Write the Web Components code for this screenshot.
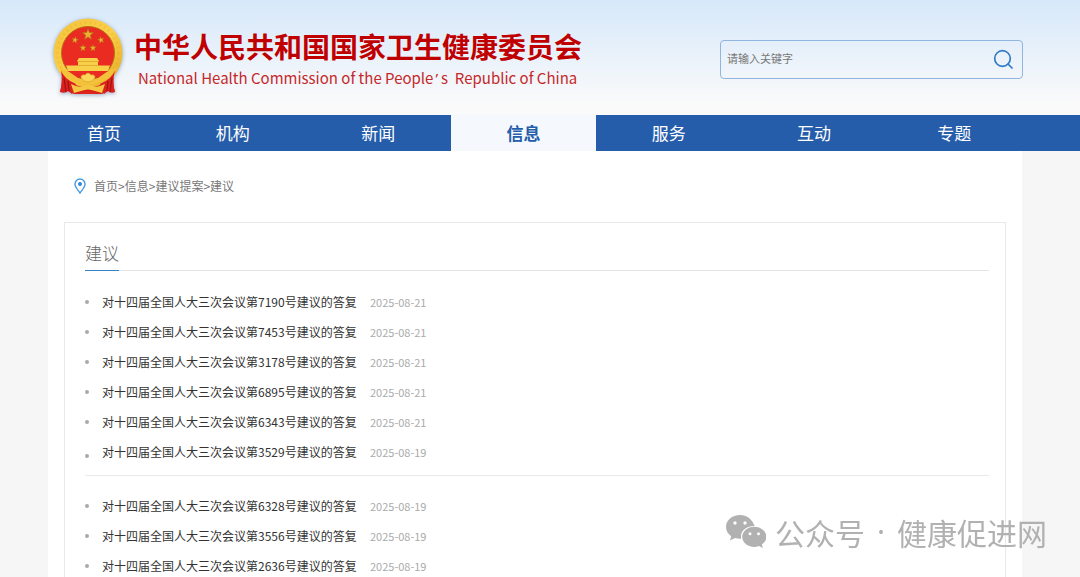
<!DOCTYPE html>
<html lang="zh-CN">
<head>
<meta charset="utf-8">
<meta name="viewport" content="width=device-width, initial-scale=1">
<title>建议 - 中华人民共和国国家卫生健康委员会</title>
<style>
  body {
    margin: 0; background: #f6f6f6; color: #333;
    font-family: "Noto Sans CJK SC", "Noto Sans", sans-serif; font-size: 12px;
    --gutter-left: 48px; --gutter-right: 58px; --blue: #255dab;
  }
</style>
</head>
<body>
<site-header></site-header>
<site-nav></site-nav>
<page-body>
  <crumb-trail></crumb-trail>
  <list-panel heading="建议">
    <reply-group ruled>
      <reply-item no="7190" date="2025-08-21"></reply-item>
      <reply-item no="7453" date="2025-08-21"></reply-item>
      <reply-item no="3178" date="2025-08-21"></reply-item>
      <reply-item no="6895" date="2025-08-21"></reply-item>
      <reply-item no="6343" date="2025-08-21"></reply-item>
      <reply-item no="3529" date="2025-08-19" closing></reply-item>
    </reply-group>
    <reply-group>
      <reply-item no="6328" date="2025-08-19"></reply-item>
      <reply-item no="3556" date="2025-08-19"></reply-item>
      <reply-item no="2636" date="2025-08-19"></reply-item>
    </reply-group>
  </list-panel>
</page-body>
<account-mark></account-mark>

<script>
const define = (name, html) => customElements.define(name, class extends HTMLElement {
  constructor() {
    super();
    const t = document.createElement('template');
    t.innerHTML = html;
    this.attachShadow({ mode: 'open' }).append(t.content.cloneNode(true));
  }
  connectedCallback() {
    for (const el of this.shadowRoot.querySelectorAll('[data-from]'))
      el.textContent = this.getAttribute(el.dataset.from);
  }
});

define('national-emblem', `
<style>
  :host { display: block; width: 72px; height: 78px; }
  svg { display: block; width: 100%; height: 100%; overflow: visible; filter: drop-shadow(0 1px 2px rgba(60,90,130,.5)); }
</style>
<svg viewBox="0 0 72 78" role="img" aria-label="国徽">
  <defs>
    <linearGradient id="gold" x1="0" y1="0" x2="1" y2="1">
      <stop offset="0" stop-color="#f3c23a"/><stop offset=".5" stop-color="#fbd04a"/><stop offset="1" stop-color="#e3a722"/>
    </linearGradient>
    <path id="star" d="M0-6 1.4-1.9 5.7-1.9 2.3.7 3.5 4.9 0 2.4-3.5 4.9-2.3.7-5.7-1.9-1.4-1.9Z" fill="#edb32c" stroke="#a8641a" stroke-width=".6"/>
  </defs>
  <path d="M11 51 C9 58 11 65 8 74 Q13 76 16 73 L22 76 H50 L56 73 Q59 76 63 74 C60 65 62 58 60 51Z" fill="#d81f1c"/>
  <circle cx="36" cy="35" r="34.5" fill="url(#gold)"/>
  <circle cx="36" cy="35" r="30.5" fill="none" stroke="#dca124" stroke-width="3" stroke-dasharray="2 3" opacity=".22"/>
  <circle cx="36" cy="35" r="26.5" fill="#e92b22" stroke="#b96d12" stroke-width="1"/>
  <use href="#star" x="36" y="16.500"/>
  <use href="#star" transform="translate(23 22) rotate(15) scale(.6)"/>
  <use href="#star" transform="translate(49 22) rotate(-15) scale(.6)"/>
  <use href="#star" transform="translate(31 30) scale(.6)"/>
  <use href="#star" transform="translate(41 30) scale(.6)"/>
  <path d="M27 40H45L47 43H25ZM26 43H46V47.500H58L56 53H16L14 47.500H26Z" fill="#f8cf48"/>
  <path d="M25 43.500H47M24 47.500H48" stroke="#dd9e25" stroke-width=".7"/>
  <path d="M15 53H57L50 60H22Z" fill="#e92b22"/>
  <path d="M9 52Q12 61 24 66L20 76 16 73 8 74Q11 64 9 52ZM63 52Q60 61 48 66L52 76 56 73 63 74Q60 64 63 52Z" fill="#dc211d"/>
  <path d="M12 60 14 74M16 63 17 73M60 60 58 74M56 63 55 73" stroke="#9f1211" stroke-width="1.200"/>
  <path d="M7 49Q17 53 26 60Q36 67 46 60Q55 53 65 49Q58 63 45 65Q36 69 27 65Q14 63 7 49Z" fill="#f4c23a"/>
  <path d="M29 60Q29 56 33 57Q36 53 39 57Q43 56 43 60Q40 64 36 64Q32 64 29 60Z" fill="#fbd658" stroke="#d6992a" stroke-width=".6"/>
  <path d="M19 66Q27 70 31 68Q36 66 41 68Q45 70 53 66L50 75 43 73Q36 70 29 73L22 75Z" fill="#f4c842"/>
  <path d="M27 76Q36 70 45 76Z" fill="#df241d"/>
</svg>`);

define('search-box', `
<style>
  :host { display: block; width: 303px; }
  form { display: flex; align-items: center; box-sizing: border-box; height: 39px; border: 1px solid #8fb5e0; border-radius: 4px; }
  input { flex: 1; min-width: 0; height: 37px; box-sizing: border-box; padding: 0 6px 3px; border: 0; outline: 0; background: none; font: inherit; font-size: 11px; color: #333; }
  input::placeholder { color: #777; opacity: 1; }
  button { display: flex; padding: 0 8px; border: 0; background: none; cursor: pointer; }
  svg { display: block; width: 21px; height: 21px; }
</style>
<form role="search" onsubmit="return false">
  <input type="text" placeholder="请输入关键字" aria-label="请输入关键字">
  <button type="submit" aria-label="搜索"><svg viewBox="0 0 21 21" fill="none" stroke="#2f7bc6" stroke-width="1.700"><circle cx="9.500" cy="9.500" r="7.800"/><path d="M14.500 14.500 19.500 19.500"/></svg></button>
</form>`);

define('site-header', `
<style>
  :host { display: block; background: linear-gradient(#d6e8fa, #fafafa 90%); }
  header { display: flex; align-items: flex-start; justify-content: space-between; box-sizing: border-box; height: 115px; padding: 18px 57px 0 52px; }
  .brand { display: flex; gap: 10px; color: #c00000; text-decoration: none; white-space: nowrap; }
  .names { padding-top: 8px; }
  h1 { margin: 0; font-size: 28px; line-height: 40px; font-weight: 700; }
  p { margin: 0; padding-left: 4px; font-size: 15px; line-height: 24px; color: #c5282a; }
  .mark { font-family: "Noto Sans", sans-serif; padding: 0 3px 0 2px; }
  search-box { margin-top: 22px; }
</style>
<header>
  <a class="brand" href="#">
    <national-emblem></national-emblem>
    <div class="names"><h1>中华人民共和国国家卫生健康委员会</h1><p lang="en">National Health Commission of the People<span class="mark">’</span>s&nbsp; Republic of China</p></div>
  </a>
  <search-box></search-box>
</header>`);

define('site-nav', `
<style>
  :host { display: block; background: var(--blue); }
  nav { display: grid; grid-template-columns: 112fr repeat(5, 145fr) 135fr; padding: 0 var(--gutter-right) 0 var(--gutter-left); }
  a { color: #fff; text-align: center; text-decoration: none; font-size: 17px; line-height: 36px; height: 36px; }
  a[aria-current] { background: #f5f9fe; color: var(--blue); font-weight: 700; }
</style>
<nav>
  <a href="#">首页</a><a href="#">机构</a><a href="#">新闻</a><a href="#" aria-current="page">信息</a><a href="#">服务</a><a href="#">互动</a><a href="#">专题</a>
</nav>`);

define('page-body', `
<style>
  :host { display: block; margin: 0 var(--gutter-right) 0 var(--gutter-left); padding: 0 16px; background: #fff; }
</style>
<slot></slot>`);

define('crumb-trail', `
<style>
  :host { display: block; padding: 25px 10px 26px; }
  nav { display: flex; align-items: center; gap: 8px; height: 20px; color: #777; line-height: 20px; }
  a { color: inherit; text-decoration: none; }
  svg { display: block; width: 12px; height: 16px; }
</style>
<nav aria-label="当前位置">
  <svg viewBox="0 0 12 16"><path d="M6 1C3.200 1 1 3.200 1 6c0 3.200 3.200 6.300 5 9 1.800-2.700 5-5.800 5-9 0-2.800-2.200-5-5-5Z" fill="none" stroke="#4b9ade" stroke-width="1.400"/><circle cx="6" cy="6" r="2" fill="#2f86d6"/></svg>
  <span><a href="#">首页</a>&gt;<a href="#">信息</a>&gt;<a href="#">建议提案</a>&gt;<a href="#">建议</a></span>
</nav>`);

define('list-panel', `
<style>
  :host { display: block; border: 1px solid #e9e9e9; padding: 15px 16px 0 20px; }
  .head { border-bottom: 1px solid #e4e4e4; margin-bottom: 16px; height: 32px; }
  h2 { display: inline-block; box-sizing: border-box; height: 33px; margin: 0; border-bottom: 1px solid #3a80c4; color: #666; font-size: 17px; font-weight: 300; line-height: 30px; }
</style>
<div class="head"><h2 data-from="heading"></h2></div>
<slot></slot>`);

define('reply-group', `
<style>
  :host { display: block; }
  :host([ruled]) { margin-bottom: 15px; border-bottom: 1px solid #e9e9e9; }
</style>
<div role="list"><slot></slot></div>`);

define('reply-item', `
<style>
  :host { display: flex; align-items: center; gap: 13px; }
  :host::before { content: ""; width: 4px; height: 4px; border-radius: 50%; background: #aaa; }
  .row { display: grid; grid-template-columns: 268px auto; line-height: 30px; height: 30px; white-space: nowrap; }
  :host([closing]) .row { padding-bottom: 8px; }
  a { color: #333; text-decoration: none; }
  time { color: #aaa; font-size: 11px; }
</style>
<div class="row" role="listitem">
  <a href="#">对十四届全国人大三次会议第<span data-from="no"></span>号建议的答复</a>
  <time data-from="date"></time>
</div>`);

define('account-mark', `
<style>
  :host { position: fixed; right: 33px; bottom: 23px; display: flex; align-items: center; gap: 9px; color: #b1b1b1; font-size: 30px; line-height: 44px; white-space: nowrap; }
  svg { display: block; width: 42px; height: 34px; }
  .text { display: flex; }
  .dot { width: 32px; text-align: center; font-family: "Noto Sans", sans-serif; }
</style>
<svg viewBox="0 0 42 34" fill="#b1b1b1" aria-hidden="true">
  <path fill-rule="evenodd" d="M16 0C8 0 2 5.400 2 12c0 3.800 2 7 5.200 9.200L6 25.500 11 23c2 .6 4 .9 6.200.8A10.500 10.500 0 0 1 17 21.500C17 15.500 22.500 11 30.600 11 28.500 4.600 22.900 0 16 0ZM11 6.300a1.700 1.700 0 1 1 0 3.400 1.700 1.700 0 0 1 0-3.400ZM21 6.300a1.700 1.700 0 1 1 0 3.400 1.700 1.700 0 0 1 0-3.400Z"/>
  <path fill-rule="evenodd" d="M30.300 11.700c-6.700 0-12.100 4.500-12.100 10.100s5.400 10.100 12.100 10.100c1.700 0 3.200-.2 4.600-.8l4 2-1-3.600c2.800-1.900 4.500-4.600 4.500-7.700 0-5.600-5.400-10.100-12.100-10.100ZM26 17.200a1.500 1.500 0 1 1 0 3 1.500 1.500 0 0 1 0-3ZM34.500 17.200a1.500 1.500 0 1 1 0 3 1.500 1.500 0 0 1 0-3Z"/>
</svg>
<div class="text"><span>公众号</span><span class="dot">·</span><span>健康促进网</span></div>`);
</script>
</body>
</html>
